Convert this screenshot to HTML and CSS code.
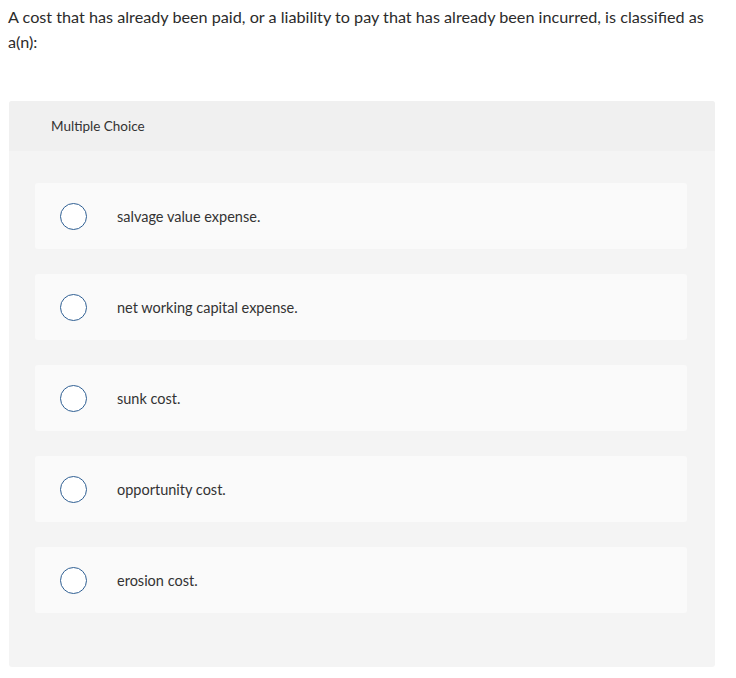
FILE: index.html
```html
<!DOCTYPE html>
<html>
<head>
<meta charset="utf-8">
<link rel="stylesheet" href="styles.css">
</head>
<body>
<p class="question">A cost that has already been paid, or a liability to pay that has already been incurred, is classified as a(n):</p>
<div class="panel">
  <div class="panel-head">Multiple Choice</div>
  <div class="panel-body">
    <div class="option"><span class="radio"></span><span class="label">salvage value expense.</span></div>
    <div class="option"><span class="radio"></span><span class="label">net working capital expense.</span></div>
    <div class="option"><span class="radio"></span><span class="label">sunk cost.</span></div>
    <div class="option"><span class="radio"></span><span class="label">opportunity cost.</span></div>
    <div class="option"><span class="radio"></span><span class="label">erosion cost.</span></div>
  </div>
</div>
</body>
</html>
```
FILE: styles.css
```css
html, body {
  margin: 0;
  padding: 0;
  background: #ffffff;
}
body {
  font-family: "Lato", "Open Sans", sans-serif;
  color: #333333;
  padding: 4px 21px 0 8px;
}
.question {
  margin: 0;
  font-size: 16.2px;
  line-height: 25px;
  color: #2b2b2b;
}
.panel {
  margin: 47px 0 0 1px;
  width: 706px;
  border-radius: 3px;
  overflow: hidden;
  background: #f4f4f4;
}
.panel-head {
  height: 50px;
  background: #f0f0f0;
  display: flex;
  align-items: center;
  padding-left: 42px;
  font-size: 13.5px;
  color: #333;
}
.panel-body {
  display: flex;
  flex-direction: column;
  gap: 25px;
  padding: 32px 28px 54px 26px;
}
.option {
  height: 66px;
  background: #fafafa;
  border-radius: 3px;
  display: flex;
  align-items: center;
  padding-left: 25px;
}
.radio {
  width: 25px;
  height: 25px;
  border: 1.5px solid #2f5f93;
  border-radius: 50%;
  background: #fff;
  flex: none;
}
.label {
  margin-left: 30px;
  font-size: 14.5px;
  color: #333;
}
```
